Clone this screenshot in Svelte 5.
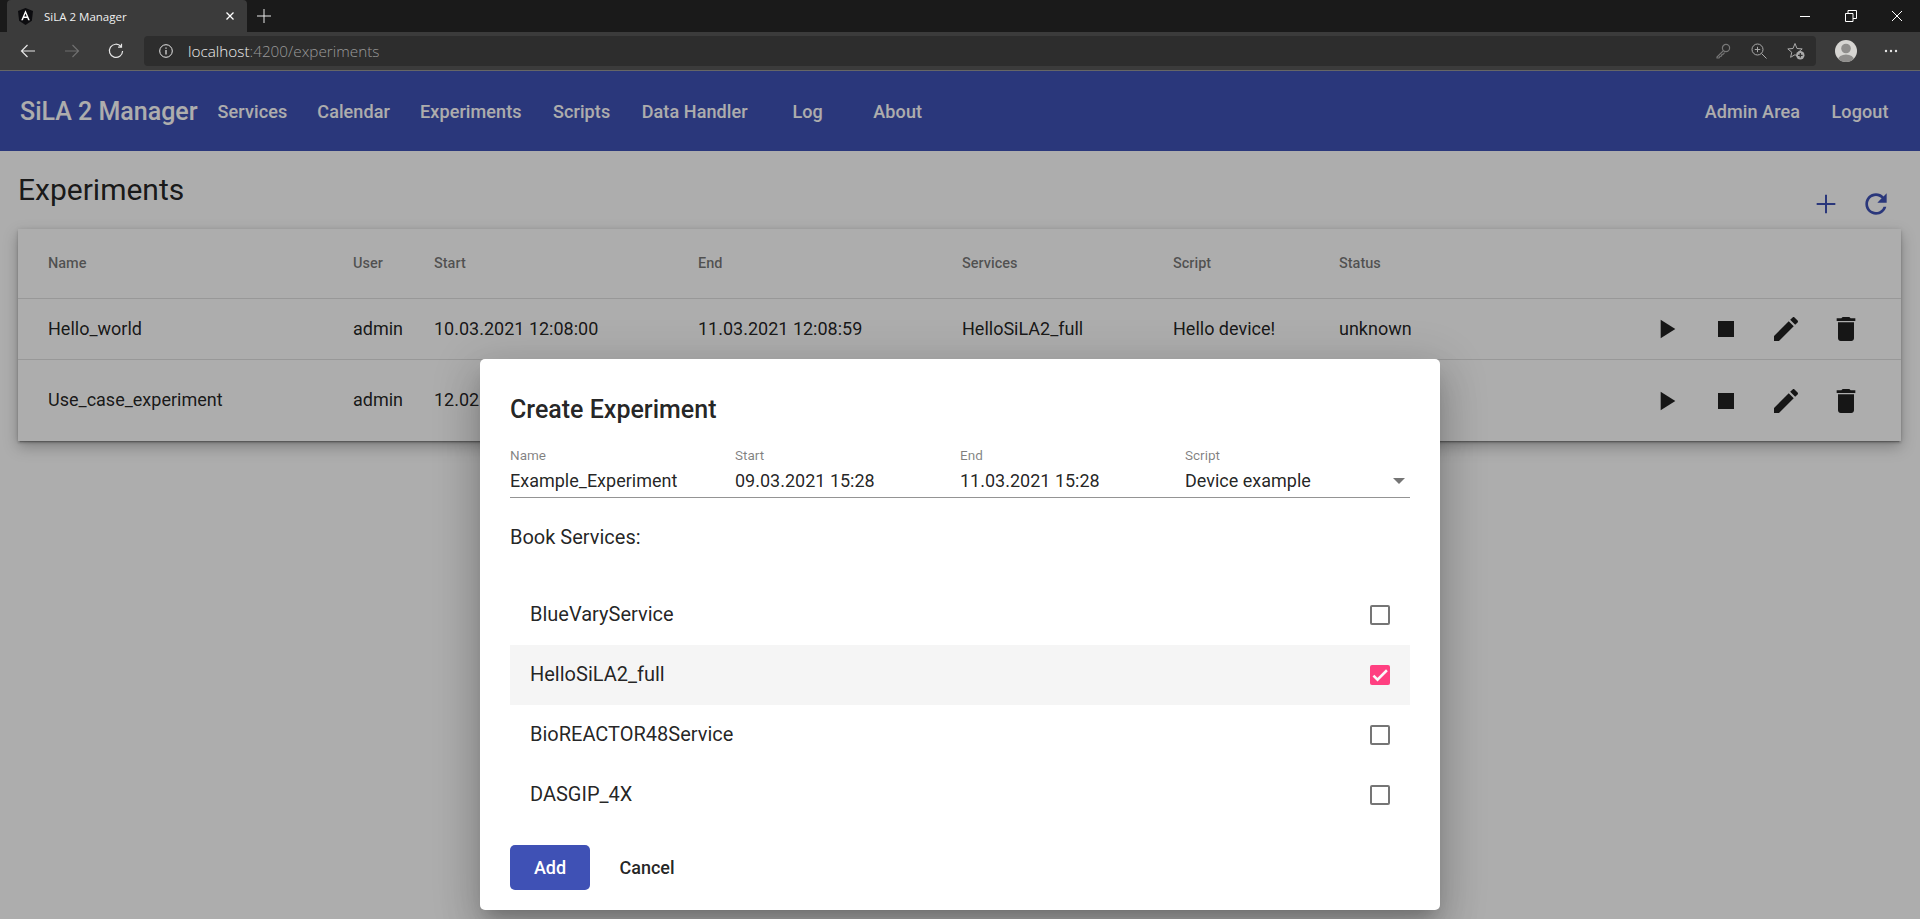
<script lang="ts">
  const navLinks = ["Services", "Calendar", "Experiments", "Scripts", "Data Handler", "Log", "About"];

  const columns = ["Name", "User", "Start", "End", "Services", "Script", "Status"];
  const experiments = [
    { name: "Hello_world", user: "admin", start: "10.03.2021 12:08:00", end: "11.03.2021 12:08:59", services: "HelloSiLA2_full", script: "Hello device!", status: "unknown" },
    { name: "Use_case_experiment", user: "admin", start: "12.02.2021 09:30:00", end: "12.02.2021 17:30:00", services: "BlueVaryService", script: "Device example", status: "unknown" }
  ];

  const fields = [
    { label: "Name", value: "Example_Experiment" },
    { label: "Start", value: "09.03.2021 15:28" },
    { label: "End", value: "11.03.2021 15:28" }
  ];

  let services = $state([
    { name: "BlueVaryService", booked: false },
    { name: "HelloSiLA2_full", booked: true },
    { name: "BioREACTOR48Service", booked: false },
    { name: "DASGIP_4X", booked: false }
  ]);
</script>

<div class="browser">
  <div class="tabstrip">
    <div class="tab">
      <svg class="favicon" viewBox="0 0 16 18" width="15" height="17">
        <path d="M8 0 0 3l1.200 10.600L8 18l6.800-4.400L16 3z" fill="#0c0c0f" />
        <path d="M8 2.400 3.400 13h1.800l.9-2.400h3.800l.9 2.400h1.800zM6.700 9 8 5.800 9.300 9z" fill="#fff" />
      </svg>
      <span class="tab-title">SiLA 2 Manager</span>
      <svg class="tab-close" viewBox="0 0 10 10" width="10" height="10">
        <path d="M1.500 1.500l7 7M8.500 1.500l-7 7" stroke="#fff" stroke-width="1.300" />
      </svg>
    </div>
    <svg class="new-tab" viewBox="0 0 14 14" width="14" height="14">
      <path d="M7 0v14M0 7h14" stroke="#e8e8e8" stroke-width="1" />
    </svg>
    <div class="window-controls">
      <svg viewBox="0 0 12 12" width="12" height="12"><path d="M1 6.500h10" stroke="#fff" /></svg>
      <svg viewBox="0 0 12 12" width="12" height="12">
        <path d="M.5 3.500h7.500v8H.5zM3 3.500V.5h8.500v8H8" fill="none" stroke="#fff" />
      </svg>
      <svg viewBox="0 0 12 12" width="12" height="12"><path d="M1 1l10 10M11 1 1 11" stroke="#fff" /></svg>
    </div>
  </div>

  <div class="toolbar">
    <svg class="tool first" viewBox="0 0 16 16" width="16" height="16">
      <path d="M15 8H1.500M7.500 2l-6 6 6 6" fill="none" stroke="#e6e6e6" stroke-width="1.200" />
    </svg>
    <svg class="tool" viewBox="0 0 16 16" width="16" height="16">
      <path d="M1 8h13.500M8.500 2l6 6-6 6" fill="none" stroke="#6f6f6f" stroke-width="1.200" />
    </svg>
    <svg class="tool" viewBox="0 0 16 16" width="16" height="16">
      <path d="M13 3.500A6.600 6.600 0 1 0 14.600 8M13.500 .8v3.400h-3.400" fill="none" stroke="#e6e6e6" stroke-width="1.200" />
    </svg>
    <div class="address">
      <svg viewBox="0 0 14 14" width="14" height="14">
        <circle cx="7" cy="7" r="6.300" fill="none" stroke="#e6e6e6" stroke-width="1" />
        <path d="M7 6v4.500M7 3.400v1.300" stroke="#e6e6e6" stroke-width="1.200" />
      </svg>
      <span class="url"><span class="host">localhost</span>:4200/experiments</span>
      <div class="address-icons">
        <svg viewBox="0 0 16 16" width="16" height="16">
          <circle cx="11" cy="5" r="3.600" fill="none" stroke="#777" stroke-width="1.200" />
          <path d="M8.400 7.600 2 14v1h2l1-1.500 1.500-.5.500-1.500 1.500-.5 1-1.500" fill="none" stroke="#777" stroke-width="1.200" />
        </svg>
        <svg viewBox="0 0 16 16" width="16" height="16">
          <circle cx="6.500" cy="6.500" r="5.500" fill="none" stroke="#aaa" stroke-width="1" />
          <path d="M10.500 10.500 15.500 15.500M6.500 3.800v5.400M3.800 6.500h5.400" stroke="#aaa" stroke-width="1" />
        </svg>
        <svg viewBox="0 0 18 18" width="18" height="18">
          <path d="M8 1.500l2 5 5.200.4-4 3.400 1.200 5L8 12.700 3.600 15.300l1.200-5-4-3.400L6 6.500z" fill="none" stroke="#aaa" stroke-width="1" />
          <circle cx="13.300" cy="13.300" r="4.200" fill="#aaa" />
          <path d="M13.300 11v4.600M11 13.300h4.600" stroke="#2d2d2d" stroke-width="1.200" />
        </svg>
      </div>
    </div>
    <svg class="avatar" viewBox="0 0 22 22" width="22" height="22">
      <defs><clipPath id="avatar-clip"><circle cx="11" cy="11" r="11" /></clipPath></defs>
      <circle cx="11" cy="11" r="11" fill="#d6d5d2" />
      <g clip-path="url(#avatar-clip)" fill="#8f8e8c">
        <circle cx="11" cy="8.500" r="4.800" />
        <ellipse cx="11" cy="20" rx="8" ry="5.500" />
      </g>
    </svg>
    <svg class="more" viewBox="0 0 14 4" width="14" height="4" fill="#e6e6e6">
      <circle cx="2" cy="2" r="1.200" /><circle cx="7" cy="2" r="1.200" /><circle cx="12" cy="2" r="1.200" />
    </svg>
  </div>

  <div class="app">
    <header class="navbar">
      <span class="brand">SiLA 2 Manager</span>
      {#each navLinks as link}
        <span class="nav-btn">{link}</span>
      {/each}
      <span class="spacer"></span>
      <span class="nav-btn">Admin Area</span>
      <span class="nav-btn">Logout</span>
    </header>

    <main class="content">
      <div class="head">
        <h1>Experiments</h1>
        <div class="head-actions">
          <svg viewBox="0 0 24 24" width="32" height="32"><path d="M19 12.750h-6.250V19h-1.500v-6.250H5v-1.500h6.250V5h1.500v6.250H19z" /></svg>
          <svg viewBox="0 0 24 24" width="32" height="32"><path d="M17.650 6.350C16.200 4.900 14.210 4 12 4c-4.420 0-7.990 3.580-7.990 8s3.570 8 7.990 8c3.730 0 6.840-2.550 7.730-6h-2.080c-.82 2.330-3.040 4-5.650 4-3.310 0-6-2.690-6-6s2.690-6 6-6c1.660 0 3.140.69 4.220 1.780L13 11h7V4l-2.350 2.350z" /></svg>
        </div>
      </div>

      <div class="card">
        <div class="row header-row">
          {#each columns as col}
            <span>{col}</span>
          {/each}
        </div>
        {#each experiments as exp, i}
          <div class="row" class:tall={i === 1}>
            <span class="cell">{exp.name}</span>
            <span class="cell">{exp.user}</span>
            <span class="cell">{exp.start}</span>
            <span class="cell">{exp.end}</span>
            <span class="cell">{exp.services}</span>
            <span class="cell">{exp.script}</span>
            <span class="cell">{exp.status}</span>
            <div class="row-actions">
              <svg viewBox="0 0 24 24" width="32" height="32"><path d="M8 5v14l11-7z" /></svg>
              <svg viewBox="0 0 24 24" width="32" height="32"><path d="M6 6h12v12H6z" /></svg>
              <svg viewBox="0 0 24 24" width="32" height="32"><path d="M3 17.250V21h3.750L17.810 9.940l-3.750-3.750L3 17.250zM20.710 7.040c.39-.39.39-1.020 0-1.410l-2.340-2.340c-.39-.39-1.020-.39-1.410 0l-1.830 1.830 3.750 3.750 1.830-1.830z" /></svg>
              <svg viewBox="0 0 24 24" width="32" height="32"><path d="M6 19c0 1.100.9 2 2 2h8c1.100 0 2-.9 2-2V7H6v12zM19 4h-3.500l-1-1h-5l-1 1H5v2h14V4z" /></svg>
            </div>
          </div>
        {/each}
      </div>
    </main>

    <div class="backdrop">
      <div class="dialog">
        <h2>Create Experiment</h2>
        <div class="form-row">
          {#each fields as f}
            <div class="field">
              <span class="label">{f.label}</span>
              <span class="value">{f.value}</span>
            </div>
          {/each}
          <div class="field">
            <span class="label">Script</span>
            <span class="value">Device example</span>
            <span class="caret"></span>
          </div>
        </div>

        <p class="book">Book Services:</p>

        <div class="service-list">
          {#each services as s}
            <div class="service" class:selected={s.booked}>
              <span class="service-name">{s.name}</span>
              <span class="checkbox" class:checked={s.booked}>
                {#if s.booked}
                  <svg viewBox="0 0 24 24" width="20" height="20">
                    <path d="M4.100 12.700 9 17.600 20.300 6.300" fill="none" stroke="#fafafa" stroke-width="3" />
                  </svg>
                {/if}
              </span>
            </div>
          {/each}
        </div>

        <div class="actions">
          <span class="btn primary">Add</span>
          <span class="btn">Cancel</span>
        </div>
      </div>
    </div>
  </div>
</div>

<style>
  :global(body) {
    margin: 0;
    overflow: hidden;
    background: #fff;
  }
  .browser {
    width: 1920px;
    height: 919px;
    display: flex;
    flex-direction: column;
    font-family: Roboto, "Liberation Sans", sans-serif;
    overflow: hidden;
  }

  /* browser chrome */
  .tabstrip {
    height: 32px;
    background: #1a1a1a;
    display: flex;
    align-items: center;
    flex-shrink: 0;
  }
  .tab {
    margin-left: 7px;
    width: 240px;
    height: 32px;
    box-sizing: border-box;
    background: #3b3b3b;
    border-radius: 4px 4px 0 0;
    display: flex;
    align-items: center;
    padding: 0 12px 0 11px;
    color: #f0f0f0;
    font-family: "Open Sans", "Liberation Sans", sans-serif;
    font-size: 11.5px;
  }
  .tab-title {
    margin-left: 11px;
    flex: 1;
  }
  .new-tab {
    margin-left: 10px;
  }
  .window-controls {
    margin-left: auto;
    display: flex;
    gap: 34px;
    padding-right: 17px;
  }
  .toolbar {
    height: 38px;
    background: #3b3b3b;
    border-bottom: 1px solid #666;
    display: flex;
    align-items: center;
    flex-shrink: 0;
  }
  .tool {
    margin-left: 28px;
  }
  .tool.first {
    margin-left: 20px;
  }
  .address {
    margin-left: 20px;
    width: 1672px;
    height: 30px;
    flex-shrink: 0;
    box-sizing: border-box;
    padding: 0 11px 0 15px;
    background: #2d2d2d;
    border-radius: 4px;
    display: flex;
    align-items: center;
    color: #9a9a9a;
    font-family: "Open Sans", "Liberation Sans", sans-serif;
    font-size: 15.3px;
    font-weight: 300;
  }
  .url {
    margin-left: 15px;
  }
  .host {
    color: #eee;
  }
  .address-icons {
    margin-left: auto;
    display: flex;
    align-items: center;
    gap: 20px;
  }
  .avatar {
    margin-left: 19px;
    flex-shrink: 0;
  }
  .more {
    margin-left: 27px;
    flex-shrink: 0;
  }

  /* app */
  .app {
    position: relative;
    flex: 1;
    display: flex;
    flex-direction: column;
    overflow: hidden;
  }
  .navbar {
    height: 80px;
    flex-shrink: 0;
    background: #3f51b5;
    color: #fff;
    display: flex;
    align-items: center;
    padding: 0 15px 0 20px;
  }
  .brand {
    font-size: 25px;
    font-weight: 500;
    margin-right: 5px;
  }
  .nav-btn {
    min-width: 90px;
    box-sizing: border-box;
    padding: 0 15px;
    text-align: center;
    font-size: 18px;
    font-weight: 500;
    letter-spacing: 0.1px;
    white-space: nowrap;
  }
  .spacer {
    flex: 1;
  }
  .content {
    flex: 1;
    padding: 0 19px 0 18px;
  }
  .head {
    height: 78px;
    display: flex;
    align-items: flex-start;
    justify-content: space-between;
  }
  h1 {
    margin: 21px 0 0;
    font-size: 30px;
    font-weight: 400;
    line-height: 36px;
    color: rgba(0, 0, 0, 0.87);
  }
  .head-actions {
    display: flex;
    gap: 18px;
    margin: 37px 9px 0 0;
    fill: #3f51b5;
  }
  .card {
    background: #fff;
    box-shadow: 0 3px 1px -2px rgba(0, 0, 0, 0.2), 0 2px 2px 0 rgba(0, 0, 0, 0.14), 0 1px 5px 0 rgba(0, 0, 0, 0.12), 0 6px 14px rgba(0, 0, 0, 0.25);
  }
  .row {
    display: grid;
    grid-template-columns: 305px 81px 264px 264px 211px 166px 150px 1fr;
    align-items: center;
    height: 60px;
    padding-left: 30px;
    border-bottom: 1px solid rgba(0, 0, 0, 0.12);
    font-size: 18px;
    color: rgba(0, 0, 0, 0.87);
  }
  .row.tall {
    height: 81px;
    border-bottom: 0;
  }
  .cell {
    margin-bottom: 2px;
  }
  .header-row {
    height: 69px;
    font-size: 14.5px;
    font-weight: 500;
    color: rgba(0, 0, 0, 0.54);
  }
  .row-actions {
    display: flex;
    justify-content: flex-end;
    gap: 28px;
    padding-right: 39px;
    fill: rgba(0, 0, 0, 0.87);
  }

  /* dialog */
  .backdrop {
    position: absolute;
    inset: 0;
    background: rgba(0, 0, 0, 0.32);
    display: flex;
    justify-content: center;
    align-items: flex-start;
    padding-top: 288px;
  }
  .dialog {
    width: 960px;
    height: 551px;
    box-sizing: border-box;
    padding: 30px;
    background: #fff;
    border-radius: 5px;
    color: rgba(0, 0, 0, 0.87);
    box-shadow: 0 11px 15px -7px rgba(0, 0, 0, 0.2), 0 24px 38px 3px rgba(0, 0, 0, 0.14), 0 9px 46px 8px rgba(0, 0, 0, 0.12);
  }
  h2 {
    margin: 0;
    font-size: 25px;
    font-weight: 500;
    line-height: 42px;
  }
  .form-row {
    display: grid;
    grid-template-columns: repeat(4, 225px);
    margin-top: 17px;
    height: 49px;
    border-bottom: 1px solid rgba(0, 0, 0, 0.42);
  }
  .field {
    position: relative;
    display: flex;
    flex-direction: column;
  }
  .label {
    font-size: 13.5px;
    line-height: 15px;
    color: rgba(0, 0, 0, 0.5);
  }
  .value {
    font-size: 18px;
    line-height: 25px;
    margin-top: 5px;
  }
  .caret {
    position: absolute;
    right: 5px;
    top: 30px;
    border-left: 6.5px solid transparent;
    border-right: 6.5px solid transparent;
    border-top: 6.5px solid rgba(0, 0, 0, 0.54);
  }
  .book {
    margin: 26px 0 0;
    font-size: 20px;
    line-height: 27px;
  }
  .service-list {
    margin-top: 34px;
  }
  .service {
    height: 60px;
    display: flex;
    align-items: center;
    justify-content: space-between;
    padding: 0 20px;
    font-size: 20px;
  }
  .service-name {
    margin-bottom: 2px;
  }
  .service.selected {
    background: rgba(0, 0, 0, 0.04);
  }
  .checkbox {
    width: 20px;
    height: 20px;
    box-sizing: border-box;
    border: 2px solid rgba(0, 0, 0, 0.54);
    border-radius: 2px;
  }
  .checkbox.checked {
    background: #ff4081;
    border: 0;
  }
  .checkbox svg {
    display: block;
  }
  .actions {
    display: flex;
    margin-top: 20px;
    gap: 17px;
  }
  .btn {
    width: 80px;
    height: 45px;
    line-height: 45px;
    border-radius: 5px;
    text-align: center;
    font-size: 18px;
    font-weight: 500;
  }
  .btn.primary {
    background: #3f51b5;
    color: #fff;
  }
</style>
